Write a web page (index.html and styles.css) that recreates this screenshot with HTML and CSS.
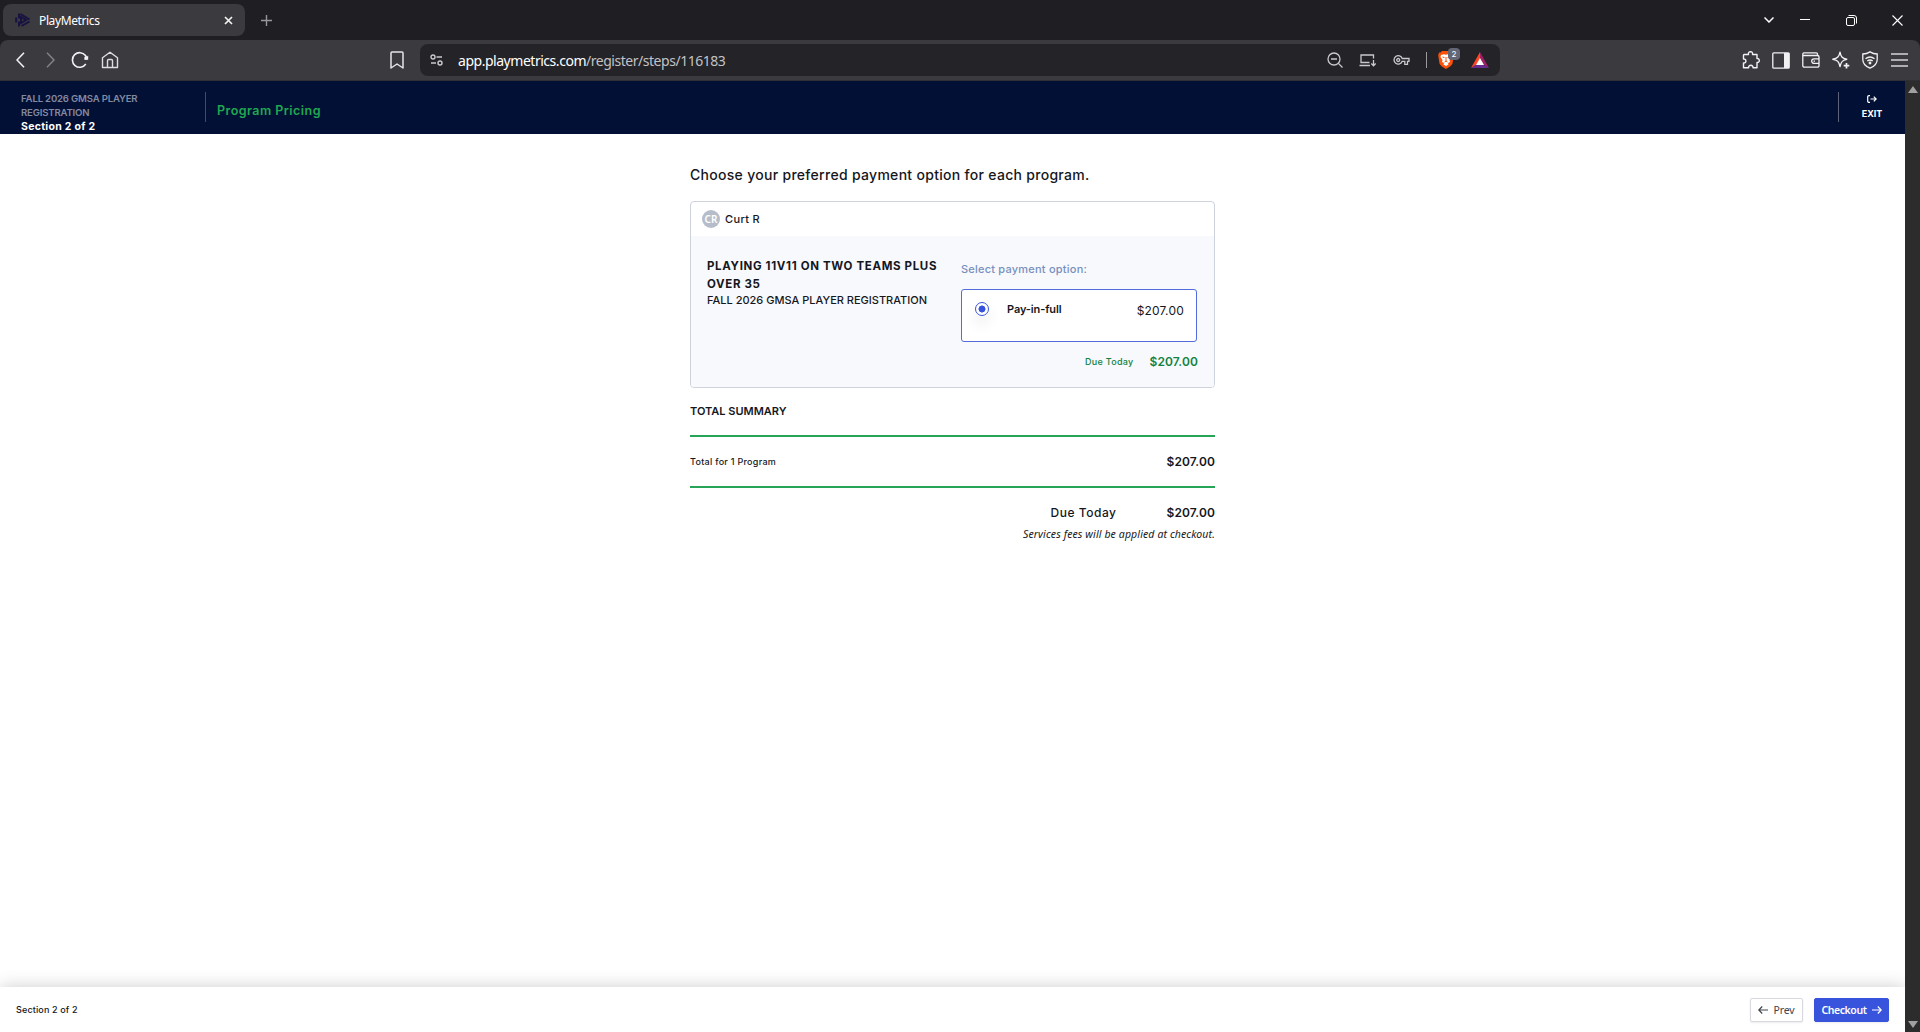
FILE: index.html
```html
<!DOCTYPE html>
<html lang="en">
<head>
<meta charset="utf-8">
<title>PlayMetrics</title>
<link rel="stylesheet" href="styles.css">
</head>
<body>
<div class="tabstrip">
  <div class="tab">
    <svg class="favicon" width="16" height="16" viewBox="0 0 16 16" fill="none" stroke="#17123f" stroke-width="2"><path d="M4 1.500v5M4 9.500v5M5.500 2l9 5.500M6 5v6l5-3zM6.500 14l8-4.500M1.200 5.500v5"/></svg>
    <span class="tab-title">PlayMetrics</span>
    <svg class="tab-close" width="9" height="9" viewBox="0 0 9 9" stroke="#f2f2f2" stroke-width="1.700"><path d="M1 1l7 7M8 1l-7 7"/></svg>
  </div>
  <svg class="newtab" width="11" height="11" viewBox="0 0 11 11" stroke="#98979b" stroke-width="1.400"><path d="M5.500 0v11M0 5.500h11"/></svg>
  <div class="window-controls">
    <svg width="10" height="6" viewBox="0 0 10 6" fill="none" stroke="#fff" stroke-width="1.500"><path d="M.5.5L5 5 9.500.5"/></svg>
    <svg width="10" height="10" viewBox="0 0 10 10" stroke="#fff"><path d="M0 4.500h10"/></svg>
    <svg width="11" height="11" viewBox="0 0 11 11" fill="none" stroke="#fff"><rect x=".5" y="2.500" width="8" height="8" rx="1.500"/><path d="M2.500.5h5.500a2.500 2.500 0 0 1 2.500 2.500v5.500"/></svg>
    <svg width="11" height="11" viewBox="0 0 11 11" stroke="#fff" stroke-width="1.100"><path d="M.5.5l10 10M10.500.5l-10 10"/></svg>
  </div>
</div>
<div class="toolbar">
  <div class="nav">
    <svg width="9" height="16" viewBox="0 0 9 16" fill="none" stroke="#f1f1f3" stroke-width="1.600"><path d="M8 .8L1 8l7 7.200"/></svg>
    <svg width="9" height="16" viewBox="0 0 9 16" fill="none" stroke="#858489" stroke-width="1.400"><path d="M1 .8L8 8l-7 7.200"/></svg>
    <svg width="18" height="18" viewBox="0 0 18 18" fill="none" stroke="#f1f1f3" stroke-width="1.600"><path d="M14.800 13A7.300 7.300 0 1 1 14.500 4.500l1 2"/><circle cx="15" cy="7" r="1.800" fill="#f1f1f3" stroke="none"/><path d="M17.200 4.500v4.200h-4.200z" fill="#f1f1f3" stroke="none"/></svg>
    <svg width="18" height="18" viewBox="0 0 18 18" fill="none" stroke="#dedee1" stroke-width="1.400" stroke-linejoin="round"><path d="M1.500 6.800L9 1.200l7.500 5.600v9.700h-15zM6.500 16.500V9.500a1 1 0 0 1 1-1h3a1 1 0 0 1 1 1v7"/></svg>
  </div>
  <svg class="bookmark" width="14" height="18" viewBox="0 0 14 18" fill="none" stroke="#e6e6e9" stroke-width="1.500" stroke-linejoin="round"><path d="M1 2a1 1 0 0 1 1-1h10a1 1 0 0 1 1 1v15l-6-4-6 4z"/></svg>
  <div class="address">
    <svg class="tune" width="13" height="12" viewBox="0 0 13 12" fill="none" stroke="#c9c9cd" stroke-width="1.400"><circle cx="3" cy="3" r="2"/><path d="M6.500 3H12M1 9h5"/><circle cx="10" cy="9" r="2"/></svg>
    <span class="url"><b>app.playmetrics.com</b>/register/steps/116183</span>
    <div class="address-icons">
      <svg width="16" height="16" viewBox="0 0 16 16" fill="none" stroke="#c9c9cd" stroke-width="1.300"><circle cx="7" cy="7" r="6"/><path d="M4 7h6M11.400 11.400L15.500 15.500"/></svg>
      <svg width="18" height="13" viewBox="0 0 18 13" fill="none" stroke="#c9c9cd" stroke-width="1.300"><path d="M10.500 8.500H2V1h12.500v3.500M.5 11.500h10.500M14.500 6v5.500M12.300 9.500l2.200 2.300 2.200-2.300"/></svg>
      <svg width="17" height="11" viewBox="0 0 17 11" fill="none" stroke="#c9c9cd" stroke-width="1.300"><path d="M9.200 3.500H16v2.800h-1.500v3h-2.700v-3H9.200A4.200 4.200 0 1 1 9.200 3.500z"/><circle cx="5.200" cy="5" r="1.500"/></svg>
    </div>
    <span class="address-rule"></span>
    <div class="shield">
      <svg width="16" height="18" viewBox="0 0 16 18"><path d="M4 0h8l1.500 1.500 1.500 0 .8 3-1.300 8C14 14.500 10 17 8 18 6 17 2 14.500 1.500 12.500L.2 4.500 1 1.500h1.500z" fill="#fb5008"/><path d="M3 4l3-.8 2 .6 2-.6L13 4l.5 2-2 3 .5 2-2 1 .5 1.500L8 15l-2.500-1.500L6 12l-2-1 .5-2-2-3z" fill="#fff"/><path d="M4.500 6l2 .6M11.500 6l-2 .6M8 6v4l-1.500 1M8 10l1.500 1" stroke="#fb5008" fill="none"/></svg>
      <span class="badge">2</span>
    </div>
    <svg class="bat" width="18" height="16" viewBox="0 0 18 16"><path d="M9 0L0 16 9 10.500z" fill="#ff4724"/><path d="M9 0l9 16-9-5.500z" fill="#9e1f63"/><path d="M0 16h18l-9-5.500z" fill="#662d91"/><path d="M9 6l-4 7h8z" fill="#fff"/></svg>
  </div>
  <div class="extensions">
    <svg width="18" height="18" viewBox="0 0 18 18" fill="none" stroke="#f1f1f3" stroke-width="1.400" stroke-linejoin="round"><path d="M2 3.500h4.500C6 1.500 7 .8 8.500.8s2.500.7 2 2.700H15v4c1.500-.2 2.300.6 2.300 2s-.8 2.200-2.300 2V16.800h-4c.2-1.600-.8-2.500-2.200-2.500s-2.400.9-2.200 2.500H1.500V12c1.700.2 2.400-.8 2.400-2s-.7-2.100-2.400-2V4z"/></svg>
    <svg width="18" height="17" viewBox="0 0 18 17"><rect x=".8" y=".8" width="16.400" height="15.400" rx="1" fill="none" stroke="#f1f1f3" stroke-width="1.300"/><path d="M12 1h5v15h-5z" fill="#f1f1f3"/></svg>
    <svg width="18" height="16" viewBox="0 0 18 16" fill="none" stroke="#f1f1f3" stroke-width="1.300"><path d="M15.500 3.500V2a1.200 1.200 0 0 0-1.200-1.200H2A1.300 1.300 0 0 0 .8 2v11.500a1.600 1.600 0 0 0 1.600 1.700h13a1.600 1.600 0 0 0 1.600-1.700V5A1.500 1.500 0 0 0 15.500 3.500H.8M17 6.800h-5a2.300 2.300 0 1 0 0 4.600h5M11.500 9.100h1.500"/></svg>
    <svg width="18" height="18" viewBox="0 0 18 18" fill="none" stroke="#f1f1f3" stroke-width="1.400" stroke-linejoin="round"><path d="M8 1.200c.8 4.500 2 6 6.800 7C10.500 9 9 10.800 8 15.500 7 10.800 5.500 9 .8 8.200 5.500 7.200 7.200 5.700 8 1.200z"/><path d="M14.500 12v5.500M11.700 14.700h5.600" stroke-width="1.700"/></svg>
    <svg width="16" height="18" viewBox="0 0 16 18" fill="none" stroke="#f1f1f3" stroke-width="1.300"><path d="M8 .9C10 2.200 12.500 3 15.200 3v5.500c0 4-3 7-7.200 8.700C3.800 15.500.8 12.500.8 8.500V3C3.500 3 6 2.200 8 .9z"/><path d="M3.500 7.800c2.700-2.200 6.300-2.200 9 0M5.300 10c1.700-1.300 3.700-1.300 5.400 0"/><circle cx="8" cy="12" r=".8" fill="#f1f1f3"/></svg>
    <svg width="17" height="14" viewBox="0 0 17 14" stroke="#d5d5d8" stroke-width="1.600"><path d="M0 1h17M0 7h17M0 13h17"/></svg>
  </div>
</div>
<div class="viewport">
  <div class="page">
    <header class="app-header">
      <div class="crumb">
        <div class="crumb-program">FALL 2026 GMSA PLAYER<br>REGISTRATION</div>
        <div class="crumb-section">Section 2 of 2</div>
      </div>
      <h1 class="step-title">Program Pricing</h1>
      <div class="exit">
        <svg width="10" height="8" viewBox="0 0 10 8" fill="none" stroke="#fff" stroke-width="1.200"><path d="M3 .6H2A1.300 1.300 0 0 0 .7 2v4A1.300 1.300 0 0 0 2 7.400h1M3.500 4H9M6.800 1.600L9.200 4 6.800 6.400"/></svg>
        <span>EXIT</span>
      </div>
    </header>
    <main class="content">
      <h2 class="prompt">Choose your preferred payment option for each program.</h2>
      <section class="card">
        <div class="player"><span class="avatar">CR</span><span class="player-name">Curt R</span></div>
        <div class="card-body">
          <div class="program">
            <div class="program-name">PLAYING 11V11 ON TWO TEAMS PLUS<br>OVER 35</div>
            <div class="program-season">FALL 2026 GMSA PLAYER REGISTRATION</div>
          </div>
          <div class="payment">
            <div class="payment-label">Select payment option:</div>
            <div class="option"><span class="radio"></span><span class="option-name">Pay-in-full</span><span class="option-price">$207.00</span></div>
            <div class="due"><span class="due-label">Due Today</span><span class="due-price">$207.00</span></div>
          </div>
        </div>
      </section>
      <h3 class="summary-title">TOTAL SUMMARY</h3>
      <div class="summary-row"><span class="summary-label">Total for 1 Program</span><span class="amount">$207.00</span></div>
      <div class="total"><span class="total-label">Due Today</span><span class="amount">$207.00</span></div>
      <p class="note">Services fees will be applied at checkout.</p>
    </main>
    <footer class="app-footer">
      <span class="footer-section">Section 2 of 2</span>
      <button class="btn"><svg width="10" height="8" viewBox="0 0 10 8" fill="none" stroke="#3f434b" stroke-width="1.200"><path d="M.8 4H10M4.200.5L.8 4l3.400 3.500"/></svg><span>Prev</span></button>
      <button class="btn btn-primary"><span>Checkout</span><svg width="10" height="8" viewBox="0 0 10 8" fill="none" stroke="#fff" stroke-width="1.200"><path d="M0 4h9.200M5.800.5L9.200 4 5.800 7.500"/></svg></button>
    </footer>
  </div>
  <div class="scrollbar"><span class="arrow arrow-up"></span><span class="arrow arrow-down"></span></div>
</div>
</body>
</html>
```
FILE: styles.css
```css
* { box-sizing: border-box; }
body { margin: 0; height: 1032px; overflow: hidden; display: flex; flex-direction: column; background: #1f1e23; font-family: Inter, "Liberation Sans", sans-serif; color: #15171c; }
svg { display: block; flex: none; }
h1, h2, h3, p { margin: 0; }

.tabstrip { height: 40px; display: flex; align-items: center; padding-left: 3px; background: #1f1e23; }
.tab { width: 242px; height: 32px; border-radius: 8px; background: #3b3a3f; display: flex; align-items: center; padding: 0 12px; }
.tab-title { margin-left: 8px; flex: 1; color: #fff; font: 12px "Noto Sans", sans-serif; letter-spacing: -.38px; }
.newtab { margin-left: 16px; }
.window-controls { margin-left: auto; display: flex; align-items: center; padding-right: 17px; }
.window-controls svg:nth-child(2) { margin-left: 26px; }
.window-controls svg:nth-child(3) { margin-left: 36px; }
.window-controls svg:nth-child(4) { margin-left: 35px; }

.toolbar { height: 41px; display: flex; align-items: center; background: #3b3a3f; border-radius: 8px 8px 0 0; border-bottom: 1px solid #302f35; }
.nav { display: flex; align-items: center; padding-left: 16px; }
.nav svg:nth-child(2) { margin-left: 21px; }
.nav svg:nth-child(3) { margin-left: 16px; }
.nav svg:nth-child(4) { margin-left: 12px; }
.bookmark { margin-left: 271px; }
.address { width: 1080px; height: 32px; margin-left: 16px; padding-left: 10px; border-radius: 8px; background: #242328; display: flex; align-items: center; }
.url { margin-left: 15px; color: #c2c2c6; font: 14px "Noto Sans", sans-serif; letter-spacing: -.47px; }
.url b { font-weight: 400; color: #fff; }
.address-icons { margin-left: auto; display: flex; align-items: center; }
.address-icons svg { margin-right: 16px; }
.address-rule { width: 1px; height: 16px; background: #9a9a9e; margin-right: 11px; }
.shield { position: relative; margin-right: 17px; }
.badge { position: absolute; left: 10px; top: -3px; width: 12px; height: 12px; border-radius: 4px; background: #636775; color: #fff; font-size: 8px; line-height: 12px; text-align: center; }
.bat { margin-right: 11px; }
.extensions { margin-left: auto; display: flex; align-items: center; gap: 12px; padding-right: 12px; }
.extensions svg:last-child { margin-left: 1px; }

.viewport { flex: 1; display: flex; min-height: 0; }
.page { flex: 1; display: flex; flex-direction: column; background: #fff; min-width: 0; }
.scrollbar { width: 15px; background: #2c2c2c; display: flex; flex-direction: column; justify-content: space-between; align-items: center; padding: 5px 0 4px; }
.arrow { border: 5px solid transparent; border-top: 0; border-bottom: 7px solid #a0a0a0; }
.arrow-down { border-bottom: 0; border-top: 7px solid #a0a0a0; }

.app-header { height: 53px; background: #031035; display: flex; padding-top: 11px; }
.crumb { width: 206px; height: 30px; padding-left: 21px; border-right: 1px solid #414a66; white-space: nowrap; }
.crumb-program { color: #8389a0; font-size: 9.600px; font-weight: 600; line-height: 14px; letter-spacing: -.18px; }
.crumb-section { color: #fff; font-size: 10.500px; font-weight: 700; line-height: 14px; letter-spacing: .3px; }
.step-title { margin-left: 11px; color: #1fa850; font-size: 12.500px; font-weight: 600; line-height: 38px; letter-spacing: .46px; }
.exit { margin-left: auto; width: 67px; height: 30px; border-left: 1px solid #5b6279; color: #fff; font-size: 9px; font-weight: 700; line-height: 12px; display: flex; flex-direction: column; align-items: center; padding-top: 3px; gap: 5px; }

.content { flex: 1; width: 525px; margin: 0 auto; padding-top: 31px; white-space: nowrap; }
.prompt { font-size: 14px; font-weight: 500; line-height: 20px; letter-spacing: .295px; }
.card { margin-top: 16px; height: 187px; border: 1px solid #cdd2dc; border-radius: 4px; overflow: hidden; }
.player { height: 34px; display: flex; align-items: center; padding-left: 11px; }
.avatar { width: 18px; height: 18px; border-radius: 50%; background: #b6bdca; color: #fff; font: 600 10px/18px "Noto Sans", sans-serif; text-align: center; }
.player-name { margin-left: 5px; padding-bottom: 1px; font-size: 11px; font-weight: 500; letter-spacing: .35px; }
.card-body { height: 151px; background: #f7f9fd; display: flex; padding: 21px 16px 0; justify-content: space-between; }
.program-name { font-size: 11.500px; font-weight: 700; line-height: 18px; letter-spacing: .65px; }
.program-season { font-size: 11px; font-weight: 500; line-height: 15px; }
.payment { width: 237px; padding-top: 2px; }
.payment-label { color: #7890bd; font-size: 11px; font-weight: 500; line-height: 20px; letter-spacing: .22px; }
.option { margin-top: 10px; height: 53px; width: 236px; border: 1px solid #536bdc; border-radius: 3px; background: #fff; display: flex; padding: 12px 12px 0 13px; }
.radio { width: 14px; height: 14px; border: 1px solid #3853dc; border-radius: 50%; background: radial-gradient(circle, #3853dc 3.200px, #fff 3.800px); box-shadow: 0 8px 14px rgba(0,0,0,.08); }
.option-name { margin-left: 18px; font-size: 11px; font-weight: 600; line-height: 15px; letter-spacing: -.12px; }
.option-price { margin-left: auto; font-size: 12px; line-height: 18px; letter-spacing: .2px; }
.due { margin-top: 11px; display: flex; justify-content: flex-end; color: #128340; line-height: 18px; }
.due-label { font-size: 9px; font-weight: 500; letter-spacing: .3px; }
.due-price { margin-left: 16px; font-size: 12px; font-weight: 600; letter-spacing: .1px; }
.summary-title { margin-top: 14px; font-size: 11px; font-weight: 600; line-height: 18px; }
.summary-row { margin-top: 15px; height: 53px; border-top: 2px solid #27a457; border-bottom: 2px solid #27a457; display: flex; justify-content: space-between; align-items: center; }
.summary-label { font-size: 9px; font-weight: 500; letter-spacing: .28px; }
.amount { font-size: 12px; font-weight: 600; letter-spacing: .12px; }
.summary-row .amount { padding-bottom: 1px; }
.total { margin-top: 16px; display: flex; justify-content: flex-end; line-height: 18px; font-size: 12px; }
.total-label { margin-right: 50px; font-weight: 500; letter-spacing: .52px; }
.note { margin-top: 4px; text-align: right; font: italic 10.500px/16px "Noto Sans", sans-serif; letter-spacing: .12px; }

.app-footer { height: 45px; background: #fff; box-shadow: 0 0 18px rgba(0,0,0,.2); display: flex; align-items: center; padding: 0 16px; }
.footer-section { margin-right: auto; font-size: 9px; font-weight: 500; letter-spacing: .14px; }
.btn { height: 24px; width: 53px; border: 1px solid #d8d8e0; border-radius: 2px; background: #fff; color: #3f434b; font: 10.500px "Noto Sans", sans-serif; letter-spacing: -.1px; display: flex; align-items: center; justify-content: center; gap: 5px; padding: 0; box-shadow: 0 1px 2px rgba(0,0,0,.08); }
.btn-primary { margin-left: 11px; width: 75px; background: #3853dc; border-color: #3853dc; color: #fff; font-weight: 600; letter-spacing: -.42px; }
```
